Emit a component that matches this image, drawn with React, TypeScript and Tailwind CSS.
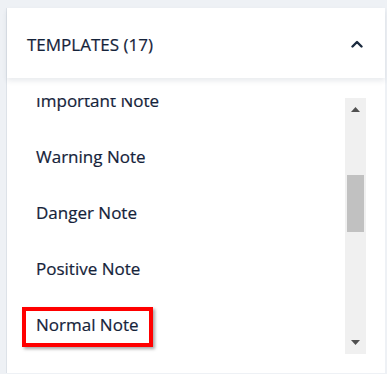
import React from "react";

const items = ["Important Note", "Warning Note", "Danger Note", "Positive Note", "Normal Note"];

export default function App() {
  return (
    <div
      className="relative w-[387px] h-[374px] overflow-hidden bg-[#eef1f5] pt-[8px] pl-[6px] pr-[2px]"
      style={{ fontFamily: '"Open Sans", "Noto Sans", sans-serif' }}
    >
      <div className="h-[365px] bg-white border-l border-[#dde2e8] flex flex-col">
        <div className="relative z-10 h-[70px] shrink-0 flex items-center justify-between pl-[20px] pr-[22px] bg-white shadow-[0_3px_5px_rgba(40,60,90,0.10)]">
          <span className="text-[17px] text-[#15233a] leading-none pt-[3px] [-webkit-text-stroke:0.2px_#15233a]">TEMPLATES (17)</span>
          <svg width="12" height="8" viewBox="0 0 12 8" className="mt-[2px]">
            <path d="M1.5 6.5 L6 2 L10.5 6.5" fill="none" stroke="#1c2b3f" strokeWidth="2.4" strokeLinecap="round" strokeLinejoin="round" />
          </svg>
        </div>
        <div className="flex pl-[20px] pr-[19px] pt-[20px]">
          <div className="flex-1 h-[256px] overflow-hidden">
            <div className="-mt-[25px] pl-[9px]">
              {items.map((t) => (
                <div key={t} className="h-[56px] flex items-center text-[17px] text-[#15233a] [-webkit-text-stroke:0.2px_#15233a]">
                  {t}
                </div>
              ))}
            </div>
          </div>
          <div className="relative w-[21px] h-[256px] bg-[#f0f0f0]">
            <svg width="9" height="5" viewBox="0 0 9 5" className="absolute left-[6px] top-[9px]">
              <path d="M0 5 L4.5 0 L9 5 Z" fill="#505050" />
            </svg>
            <div className="absolute left-[2px] w-[17px] top-[77px] h-[57px] bg-[#c1c1c1]" />
            <svg width="9" height="5" viewBox="0 0 9 5" className="absolute left-[6px] top-[242px]">
              <path d="M0 0 L9 0 L4.5 5 Z" fill="#505050" />
            </svg>
          </div>
        </div>
      </div>
      <div className="absolute left-[22px] top-[307px] w-[131px] h-[40px] border-4 border-[#ff0000] shadow-[2px_2px_3px_rgba(0,0,0,0.35)]" />
    </div>
  );
}
